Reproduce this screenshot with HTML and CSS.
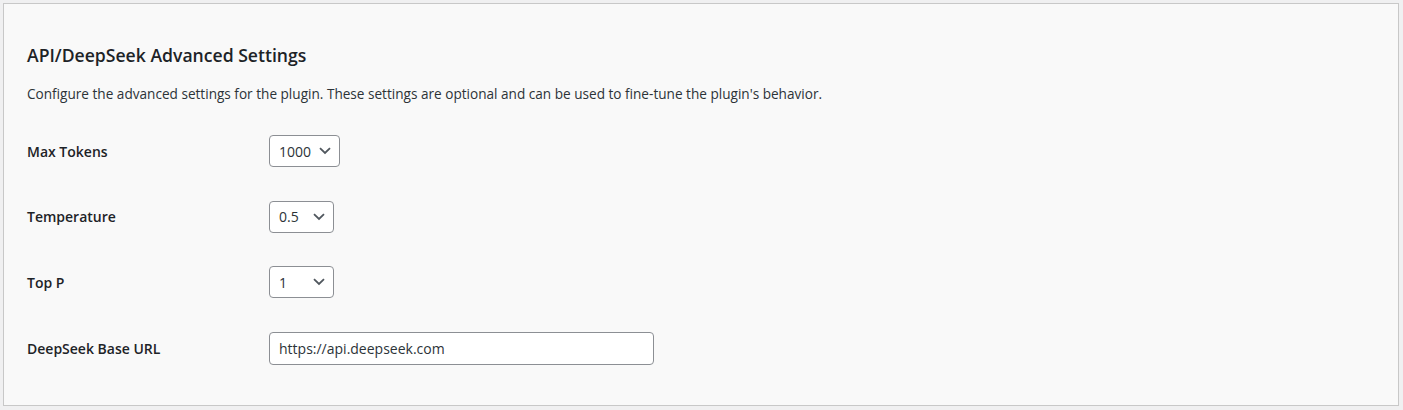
FILE: index.html
```html
<!DOCTYPE html>
<html lang="en">
<head>
<meta charset="utf-8">
<title>API/DeepSeek Advanced Settings</title>
<link rel="stylesheet" href="styles.css">
</head>
<body>
<div class="panel">
  <h2 class="panel-title">API/DeepSeek Advanced Settings</h2>
  <p class="panel-desc">Configure the advanced settings for the plugin. These settings are optional and can be used to fine-tune the plugin's behavior.</p>
  <div class="form-grid">
    <label class="field-label" for="max-tokens">Max Tokens</label>
    <div class="field">
      <div class="select select-w71">
        <span class="select-value">1000</span>
        <svg class="chevron" viewBox="0 0 12 8" width="12" height="8"><path d="M1 1.2 6 6 11 1.2" fill="none" stroke="#50575e" stroke-width="1.8"/></svg>
      </div>
    </div>

    <label class="field-label" for="temperature">Temperature</label>
    <div class="field">
      <div class="select select-w65">
        <span class="select-value">0.5</span>
        <svg class="chevron" viewBox="0 0 12 8" width="12" height="8"><path d="M1 1.2 6 6 11 1.2" fill="none" stroke="#50575e" stroke-width="1.8"/></svg>
      </div>
    </div>

    <label class="field-label" for="top-p">Top P</label>
    <div class="field">
      <div class="select select-w65">
        <span class="select-value">1</span>
        <svg class="chevron" viewBox="0 0 12 8" width="12" height="8"><path d="M1 1.2 6 6 11 1.2" fill="none" stroke="#50575e" stroke-width="1.8"/></svg>
      </div>
    </div>

    <label class="field-label" for="base-url">DeepSeek Base URL</label>
    <div class="field">
      <input class="text-input" id="base-url" type="text" value="https://api.deepseek.com">
    </div>
  </div>
</div>
</body>
</html>
```

FILE: styles.css
```css
html, body {
  margin: 0;
  padding: 0;
}
body {
  background: #f0f0f1;
  padding: 3px 4px 4px 3px;
  font-family: "Open Sans", "Liberation Sans", sans-serif;
  color: #1d2327;
  box-sizing: border-box;
  height: 410px;
}
.panel {
  box-sizing: border-box;
  height: 403px;
  background: #f9f9f9;
  border: 1px solid #c8c8c8;
  padding: 36px 23px 0 23px;
}
.panel-title {
  margin: 0;
  font-size: 17.6px;
  font-weight: 600;
  line-height: 30px;
  color: #1d2327;
}
.panel-desc {
  margin: 14px 0 0 0;
  font-size: 13.6px;
  line-height: 20px;
  color: #2c3338;
}
.form-grid {
  display: grid;
  grid-template-columns: 242px 1fr;
  row-gap: 33.5px;
  margin-top: 31px;
  align-items: center;
}
.field-label {
  font-size: 14px;
  font-weight: 600;
  color: #1d2327;
}
.field {
  display: flex;
}
.select {
  box-sizing: border-box;
  height: 32px;
  border: 1px solid #8c8f94;
  border-radius: 4px;
  background: #fff;
  display: flex;
  align-items: center;
  justify-content: space-between;
  padding: 0 8px 0 9px;
  font-size: 14px;
  color: #2c3338;
}
.select-w71 { width: 71px; }
.select-w65 { width: 65px; }
.chevron {
  display: block;
}
.text-input {
  box-sizing: border-box;
  width: 385px;
  height: 33px;
  border: 1px solid #8c8f94;
  border-radius: 4px;
  background: #fff;
  padding: 0 9px;
  font-family: inherit;
  font-size: 14px;
  color: #2c3338;
  outline: none;
}
```
